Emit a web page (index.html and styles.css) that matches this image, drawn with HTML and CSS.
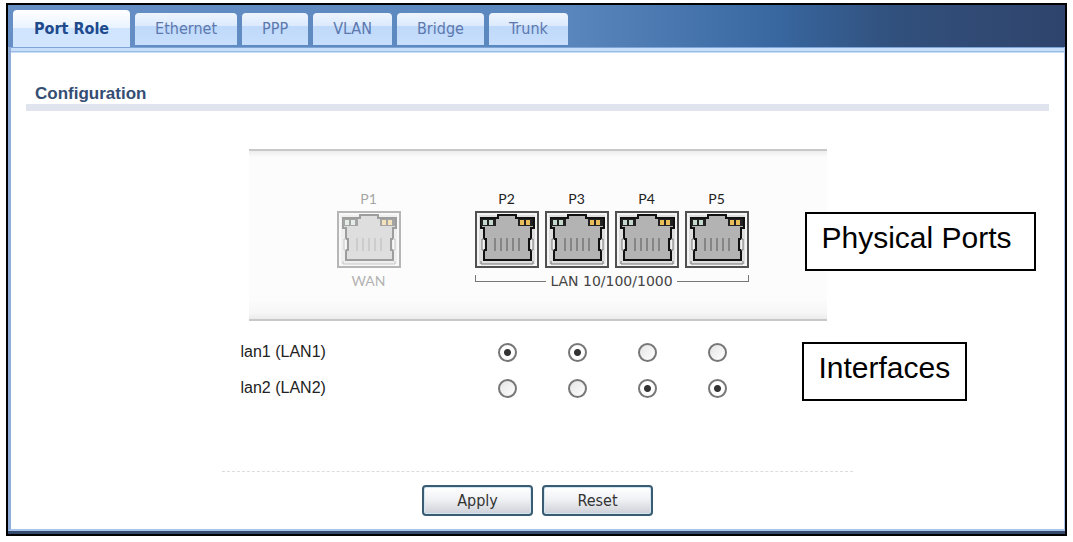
FILE: index.html
```html
<!DOCTYPE html>
<html lang="en">
<head>
    <meta charset="UTF-8">
    <meta name="viewport" content="width=device-width, initial-scale=1.0">
    <title>Port Role</title>
    <link rel="stylesheet" href="styles.css">
</head>
<body>
    <!-- RJ-45 socket shared by all ports -->
    <svg class="defs" aria-hidden="true">
        <symbol id="socket" viewBox="0 0 64 57">
            <rect x="1" y="1" width="62" height="55" fill="#dedede" stroke="#505050" stroke-width="2"/>
            <rect x="3" y="3" width="58" height="51" fill="none" stroke="#f4f4f4" stroke-width="2"/>
            <path d="M6 7H23V4H41V7H59V17H56V28H54V39H56V49H9V39H11V28H9V17H6Z" fill="#b3b3b3" stroke="#111" stroke-width="2"/>
            <path d="M9 28H7V39H9M56 28H58V39H56" fill="#f4f4f4" stroke="#777"/>
            <path d="M6 8H21V15H6ZM43 8H58V15H43Z" fill="#222"/>
            <path d="M8 9H12V14H8ZM14 9H18V14H14Z" fill="#c5d8cd"/>
            <path d="M45 9H49V14H45ZM51 9H55V14H51Z" fill="#e9bd59"/>
            <path d="M20 27V40M26 27V40M32 27V40M38 27V40M44 27V40" stroke="#858585" stroke-width="2"/>
            <path d="M6 50V53H58V50" fill="none" stroke="#777"/>
        </symbol>
    </svg>

    <div class="window">
        <nav class="tabs">
            <a class="tab active" href="#port-role">Port Role</a>
            <a class="tab" href="#ethernet">Ethernet</a>
            <a class="tab" href="#ppp">PPP</a>
            <a class="tab" href="#vlan">VLAN</a>
            <a class="tab" href="#bridge">Bridge</a>
            <a class="tab" href="#trunk">Trunk</a>
        </nav>

        <form class="content" id="port-role">
            <h1>Configuration</h1>

            <div class="device">
                <div class="port-group disabled">
                    <div class="ports">
                        <div class="port">P1<svg><use href="#socket"/></svg></div>
                    </div>
                    <div class="wan">WAN</div>
                </div>
                <div class="port-group">
                    <div class="ports">
                        <div class="port">P2<svg><use href="#socket"/></svg></div>
                        <div class="port">P3<svg><use href="#socket"/></svg></div>
                        <div class="port">P4<svg><use href="#socket"/></svg></div>
                        <div class="port">P5<svg><use href="#socket"/></svg></div>
                    </div>
                    <div class="lan">LAN 10/100/1000</div>
                </div>
                <div class="callout callout-ports">Physical Ports</div>
            </div>

            <div class="roles">
                <table>
                    <tr>
                        <th scope="row">lan1 (LAN1)</th>
                        <td><input type="radio" name="p2" value="lan1" aria-label="P2 lan1" checked></td>
                        <td><input type="radio" name="p3" value="lan1" aria-label="P3 lan1" checked></td>
                        <td><input type="radio" name="p4" value="lan1" aria-label="P4 lan1"></td>
                        <td><input type="radio" name="p5" value="lan1" aria-label="P5 lan1"></td>
                    </tr>
                    <tr>
                        <th scope="row">lan2 (LAN2)</th>
                        <td><input type="radio" name="p2" value="lan2" aria-label="P2 lan2"></td>
                        <td><input type="radio" name="p3" value="lan2" aria-label="P3 lan2"></td>
                        <td><input type="radio" name="p4" value="lan2" aria-label="P4 lan2" checked></td>
                        <td><input type="radio" name="p5" value="lan2" aria-label="P5 lan2" checked></td>
                    </tr>
                </table>
                <div class="callout callout-interfaces">Interfaces</div>
            </div>

            <div class="actions">
                <button type="submit">Apply</button>
                <button type="reset">Reset</button>
            </div>
        </form>
    </div>
</body>
</html>
```
FILE: styles.css
```css
:root {
    --ui-font: "DejaVu Sans Condensed", Tahoma, "DejaVu Sans", sans-serif;
    --text-font: "Liberation Sans", Arial, sans-serif;
    --line-blue: #a9c6ea;
    --navy: #35496f;
}

* {
    box-sizing: border-box;
}

body {
    margin: 0;
    padding: 3px 6px;
    background-color: #fff;
    font-family: var(--text-font);
    font-size: 16px;
    color: #222;
}

.defs {
    display: none;
}

.window {
    border: 2px solid #000;
    background-color: var(--navy);
}

/* Tabs */
.tabs {
    display: flex;
    align-items: flex-end;
    gap: 5px;
    height: 42px;
    padding: 0 5px;
    background: linear-gradient(to right, #668fc6, #5987bd 53%, #38669f 73%, #31507c 84%, #2f446c);
}

.tab {
    height: 32px;
    margin-bottom: 2px;
    padding: 0 20px;
    border-radius: 4px 4px 0 0;
    background: linear-gradient(#edf4fe, #dceafd 40%, #bfd9fa 41%, #c8dffc);
    font-family: var(--ui-font);
    line-height: 32px;
    color: #5c78ae;
    text-decoration: none;
    white-space: nowrap;
}

.tab.active {
    height: 37px;
    margin-bottom: 0;
    padding: 0 21px;
    background: linear-gradient(#fff, #e9f3ff 48%, #cfe4ff 49%, #d3e6ff);
    font-weight: bold;
    line-height: 37px;
    color: #204a8c;
}

/* Content */
.content {
    margin-bottom: 3px;
    padding: 36px 15px 13px;
    border-right: 1px solid var(--line-blue);
    border-bottom: 2px solid var(--line-blue);
    border-left: 3px solid #8fabd8;
    background: linear-gradient(#7fa5d6 1px, #c7dffb 1px, #c7dffb 4px, #9bbce0 4px, #9bbce0 5px, #c7dffb 5px, #c7dffb 6px, #fff 6px);
}

h1 {
    margin: 0 0 38px;
    padding-left: 9px;
    border-bottom: 7px solid #e0e4ee;
    font-size: 17px;
    line-height: 21px;
    color: #344d73;
}

/* Device front */
.device {
    position: relative;
    display: flex;
    gap: 74px;
    width: 578px;
    margin: 0 auto;
    padding: 38px 0 25px 88px;
    border-top: 2px solid #c8c8c8;
    border-bottom: 2px solid #c8c8c8;
    background: linear-gradient(#ededed, #fcfcfc 6px, #fcfcfc 148px, #f6f6f6 162px, #ebebeb);
}

.ports {
    display: flex;
    gap: 6px;
}

.port {
    width: 64px;
    font-family: Lato, sans-serif;
    font-size: 14px;
    line-height: 20px;
    text-align: center;
}

.port svg {
    display: block;
    width: 64px;
    height: 57px;
    margin-top: 2px;
}

.disabled {
    opacity: 0.4;
}

.wan,
.lan {
    font-family: "DejaVu Sans", sans-serif;
    font-size: 14px;
    line-height: 26px;
    color: #444;
    text-align: center;
}

.wan {
    font-family: Lato, sans-serif;
}

.lan {
    display: flex;
    gap: 4px;
}

/* bracket under the LAN sockets */
.lan::before,
.lan::after {
    content: "";
    flex: 1;
    height: 6px;
    margin-top: 7px;
    border-bottom: 1px solid #777;
}

.lan::before {
    border-left: 1px solid #777;
}

.lan::after {
    border-right: 1px solid #777;
}

/* Callouts */
.callout {
    position: absolute;
    height: 59px;
    padding: 0 15px;
    border: 2px solid #000;
    background-color: #fff;
    font-size: 30px;
    line-height: 48px;
    color: #000;
    white-space: nowrap;
}

.callout-ports {
    top: 61px;
    left: 556px;
    padding-right: 22px;
}

.callout-interfaces {
    top: 21px;
    left: 561px;
}

/* Interface roles */
.roles {
    position: relative;
    width: 594px;
    margin: 0 auto;
    padding: 13px 0 65px;
}

table {
    border-collapse: collapse;
}

th,
td {
    height: 36px;
    padding: 0;
}

th {
    width: 232px;
    font-weight: normal;
    text-align: left;
}

td {
    width: 70px;
    text-align: center;
}

input[type=radio] {
    appearance: none;
    display: block;
    width: 19px;
    height: 19px;
    margin: 0 auto;
    border: 2px solid #777;
    border-radius: 50%;
    background: linear-gradient(135deg, #e4e4e4, #fff);
}

input[type=radio]:checked {
    background: radial-gradient(circle, #333 3px, #fff 4px);
}

/* Buttons */
.actions {
    display: flex;
    justify-content: center;
    gap: 9px;
    max-width: 631px;
    margin: 0 auto;
    padding-top: 13px;
    border-top: 1px dashed #ddd;
}

button {
    width: 111px;
    height: 31px;
    border: 2px solid #395c72;
    border-radius: 4px;
    background: linear-gradient(#fff, #f1f2f5 45%, #cdd0d7);
    box-shadow: inset 0 0 0 1px #d2e6f2;
    font-family: var(--ui-font);
    font-size: 16px;
    color: #333;
}
```
